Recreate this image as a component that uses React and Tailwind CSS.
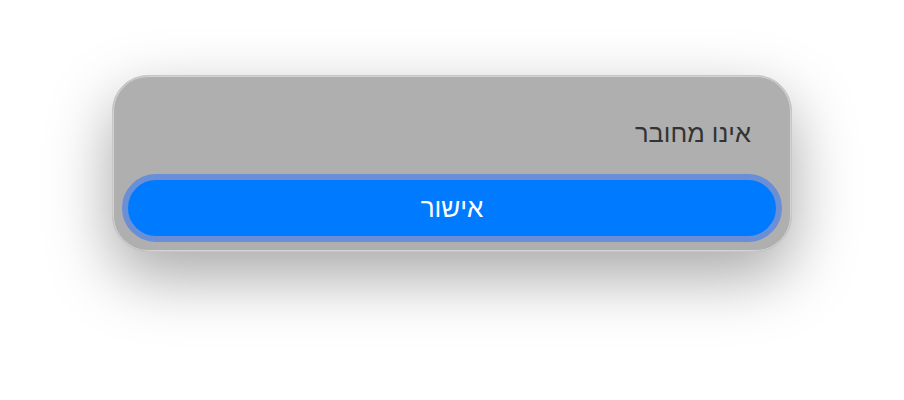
export default function App() {
  return (
    <div
      dir="rtl"
      className="w-[904px] h-[400px] bg-white flex justify-center pt-[75px]"
      style={{ fontFamily: '"Liberation Sans", "DejaVu Sans", sans-serif' }}
    >
      <div className="w-[680px] h-[177px] rounded-[36px] bg-[#afafaf] border border-[#c6c6c6] shadow-[0_24px_64px_rgba(0,0,0,0.35),inset_0_0_0_1px_rgba(255,255,255,0.45)] flex flex-col px-[9px]">
        <div className="h-[98px] flex items-center pr-[31px] pt-[16px]">
          <span className="text-[25.5px] text-[#333333]">אינו מחובר</span>
        </div>
        <button className="h-[68px] rounded-full border-[6px] border-[#6a8fd6] bg-[#007aff] text-white text-[26px] flex items-center justify-center">
          אישור
        </button>
      </div>
    </div>
  );
}
